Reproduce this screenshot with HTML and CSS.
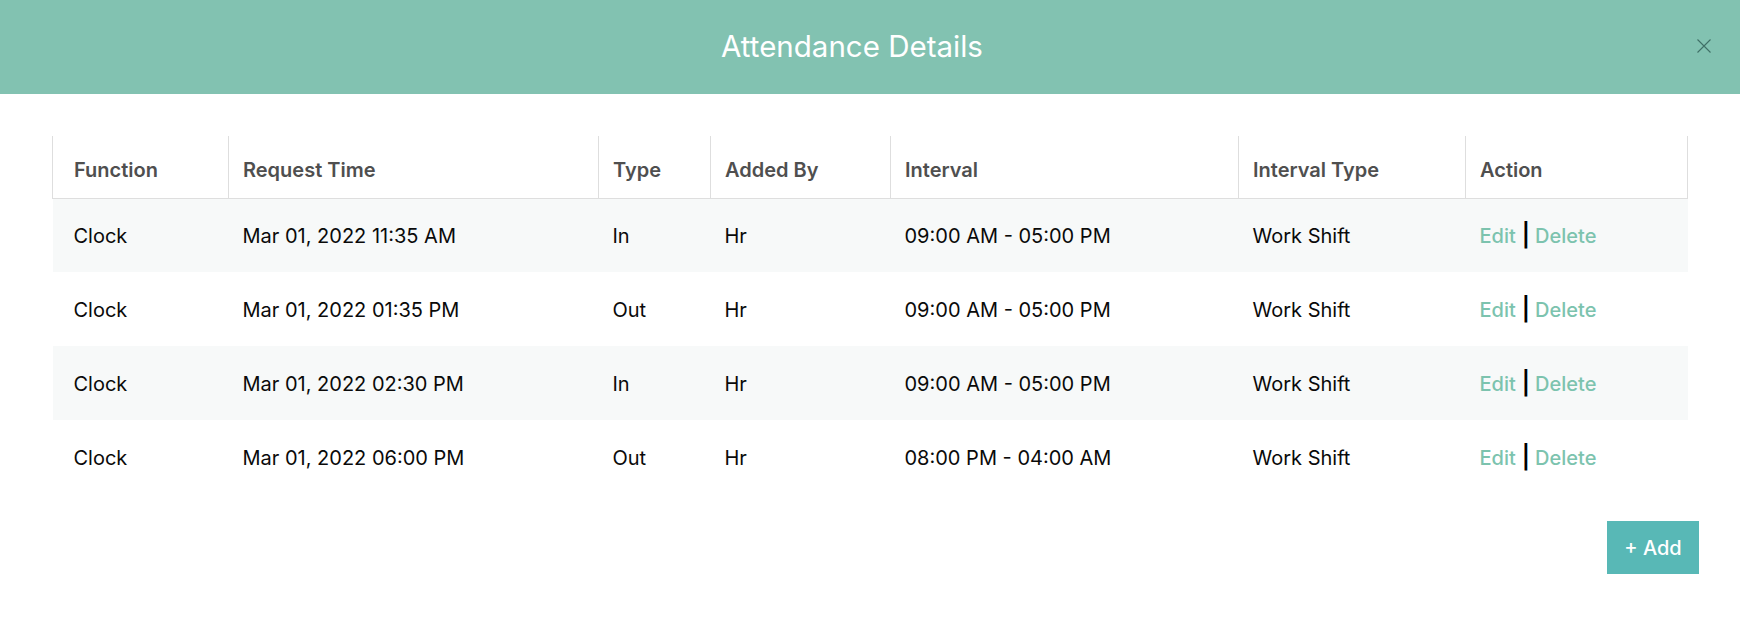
FILE: index.html
```html
<!DOCTYPE html>
<html lang="en">
<head>
<meta charset="utf-8">
<title>Attendance Details</title>
<link rel="stylesheet" href="styles.css">
</head>
<body>
<div class="modal">
  <header class="modal-header">
    <h1 class="modal-title">Attendance Details</h1>
    <button class="close-btn" aria-label="Close">
      <svg width="14" height="14" viewBox="0 0 14 14"><path d="M0.5 0.5 L13.5 13.5 M13.5 0.5 L0.5 13.5" stroke="#3f6f66" stroke-width="1.1" fill="none"/></svg>
    </button>
  </header>
  <div class="modal-body">
    <table class="att-table">
      <colgroup>
        <col class="c-func"><col class="c-time"><col class="c-type"><col class="c-by"><col class="c-int"><col class="c-itype"><col class="c-act">
      </colgroup>
      <thead>
        <tr>
          <th>Function</th><th>Request Time</th><th>Type</th><th>Added By</th><th>Interval</th><th>Interval Type</th><th>Action</th>
        </tr>
      </thead>
      <tbody>
        <tr>
          <td>Clock</td><td>Mar 01, 2022 11:35 AM</td><td>In</td><td>Hr</td><td>09:00 AM - 05:00 PM</td><td>Work Shift</td>
          <td><span class="act">Edit</span><span class="sep">|</span><span class="act">Delete</span></td>
        </tr>
        <tr>
          <td>Clock</td><td>Mar 01, 2022 01:35 PM</td><td>Out</td><td>Hr</td><td>09:00 AM - 05:00 PM</td><td>Work Shift</td>
          <td><span class="act">Edit</span><span class="sep">|</span><span class="act">Delete</span></td>
        </tr>
        <tr>
          <td>Clock</td><td>Mar 01, 2022 02:30 PM</td><td>In</td><td>Hr</td><td>09:00 AM - 05:00 PM</td><td>Work Shift</td>
          <td><span class="act">Edit</span><span class="sep">|</span><span class="act">Delete</span></td>
        </tr>
        <tr>
          <td>Clock</td><td>Mar 01, 2022 06:00 PM</td><td>Out</td><td>Hr</td><td>08:00 PM - 04:00 AM</td><td>Work Shift</td>
          <td><span class="act">Edit</span><span class="sep">|</span><span class="act">Delete</span></td>
        </tr>
      </tbody>
    </table>
  </div>
  <div class="modal-footer">
    <button class="add-btn">+ Add</button>
  </div>
</div>
</body>
</html>
```
FILE: styles.css
```css
* { box-sizing: border-box; }
html, body { margin: 0; padding: 0; background: #ffffff; }
body { font-family: Inter, "Noto Sans", sans-serif; color: #111; }

.modal { width: 1740px; }

.modal-header {
  height: 94px;
  background: #82c2b1;
  display: flex;
  align-items: center;
  padding: 0 18px;
}
.modal-title {
  flex: 1;
  margin: 0;
  text-align: center;
  color: #ffffff;
  font-size: 29.5px;
  font-weight: 400;
  line-height: 1;
}
.close-btn {
  width: 36px;
  height: 36px;
  padding: 0;
  border: 0;
  background: transparent;
  display: flex;
  align-items: center;
  justify-content: center;
  cursor: pointer;
  margin-bottom: 2px;
}

.modal-body { padding: 42px 53px 0 52px; }

.att-table {
  width: 1635px;
  border-collapse: collapse;
  table-layout: fixed;
  font-size: 20px;
}
.c-func { width: 176px; }
.c-time { width: 370px; }
.c-type { width: 112px; }
.c-by { width: 180px; }
.c-int { width: 348px; }
.c-itype { width: 227px; }
.c-act { width: 222px; }

.att-table th {
  height: 62px;
  text-align: left;
  font-weight: 600;
  color: #4f4f4f;
  padding: 6px 14px 0;
  border-left: 1px solid #dedede;
  border-right: 1px solid #dedede;
  border-bottom: 1px solid #dedede;
}
.att-table td {
  height: 74px;
  padding: 1px 14px 0;
  color: #0a0a0a;
  white-space: nowrap;
}
.att-table th:first-child,
.att-table td:first-child { padding-left: 21px; }
.att-table tbody tr:nth-child(odd) { background: #f7f9f9; }

.act { color: #7cc3ae; font-weight: 500; }
.sep { color: #000; margin: 0 5px 0 6px; font-weight: 600; font-size: 23px; line-height: 1; }

.modal-footer {
  display: flex;
  justify-content: flex-end;
  padding: 27px 41px 0 0;
}
.add-btn {
  height: 53px;
  width: 92px;
  border: 0;
  background: #58b8b6;
  color: #ffffff;
  font-family: Inter, "Noto Sans", sans-serif;
  font-size: 20px;
  font-weight: 500;
  padding: 0;
}
```
